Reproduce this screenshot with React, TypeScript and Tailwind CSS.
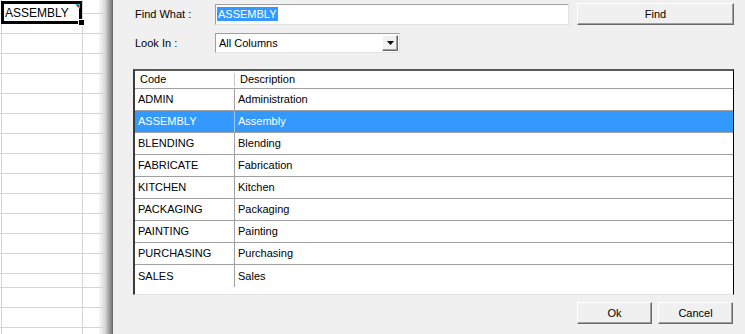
import React from "react";

const rows: [string, string][] = [
  ["ADMIN", "Administration"],
  ["ASSEMBLY", "Assembly"],
  ["BLENDING", "Blending"],
  ["FABRICATE", "Fabrication"],
  ["KITCHEN", "Kitchen"],
  ["PACKAGING", "Packaging"],
  ["PAINTING", "Painting"],
  ["PURCHASING", "Purchasing"],
  ["SALES", "Sales"],
];

// spreadsheet row heights (bottom border included)
const sheetRows = [14, 20, 20, 20, 20, 20, 20, 20, 20, 20, 20, 20, 20, 20, 14, 20, 20, 20];

function RaisedButton({ children, className }: { children: React.ReactNode; className: string }) {
  return (
    <div
      className={
        "flex items-center justify-center border border-t-white border-l-white border-b-[#696969] border-r-[#696969] bg-[#f0f0f0] shadow-[inset_-1px_-1px_0_0_#a0a0a0] text-black " +
        className
      }
    >
      {children}
    </div>
  );
}

export default function App() {
  return (
    <div
      className="flex w-[745px] h-[334px] overflow-hidden bg-[#f0f0f0] text-[11px] text-black"
      style={{ fontFamily: '"Liberation Sans", Arial, sans-serif' }}
    >
      {/* spreadsheet behind */}
      <div className="relative w-[113px] h-full bg-white shrink-0">
        <div className="flex flex-col">
          {sheetRows.map((h, i) => (
            <div key={i} className="flex border-b border-[#d4d4d4]" style={{ height: h }}>
              <div className="w-[1px]" />
              <div className="w-[81px] border-l border-[#d4d4d4]" />
              <div className="flex-1 border-l border-[#d4d4d4]" />
            </div>
          ))}
        </div>
        {/* active cell */}
        <div className="absolute left-[1px] top-[1px] w-[81px] h-[23px] border-[3px] border-black bg-white flex items-center pl-[1px]">
          <span className="text-[12px] leading-none text-black">ASSEMBLY</span>
        </div>
        <svg className="absolute left-[75px] top-[4px]" width="5" height="5" viewBox="0 0 5 5">
          <polygon points="0,0 5,0 5,5" fill="#19c6d6" />
          <polygon points="1,1 4,1 4,4" fill="#e01818" />
        </svg>
        <div className="absolute left-[79px] top-[20px] w-[5px] h-[5px] bg-black outline outline-1 outline-white" />
        {/* shadow of dialog */}
        <div className="absolute right-[1px] top-0 h-full w-[14px] bg-gradient-to-r from-white/0 via-[#d8d8d8] to-[#7a7a7a]" />
        <div className="absolute right-0 top-0 h-full w-[1px] bg-[#6a6a6a]" />
      </div>

      {/* dialog */}
      <div className="flex-1 flex flex-col pt-[3px] pl-[20px] pr-[11px]">
        {/* Find What */}
        <div className="flex items-center h-[22px]">
          <div className="w-[82px] pl-[2px]">Find What :</div>
          <div className="w-[354px] h-[21px] bg-white border border-t-[#a0a0a0] border-l-[#a0a0a0] border-b-[#e3e3e3] border-r-[#e3e3e3] flex items-center pl-[1px]">
            <span className="bg-[#3399ff] text-white leading-[14px] px-[1px]">ASSEMBLY</span>
          </div>
          <RaisedButton className="ml-[8px] w-[157px] h-[22px]">Find</RaisedButton>
        </div>

        {/* Look In */}
        <div className="flex items-center h-[20px] mt-[8px]">
          <div className="w-[82px] pl-[2px]">Look In :</div>
          <div className="w-[185px] h-[20px] bg-white border border-t-[#a0a0a0] border-l-[#a0a0a0] border-b-[#e3e3e3] border-r-[#e3e3e3] flex items-center">
            <span className="flex-1 pl-[3px]">All Columns</span>
            <RaisedButton className="w-[16px] h-[16px] mr-[1px]">
              <svg width="7" height="4" viewBox="0 0 7 4">
                <polygon points="0,0 7,0 3.5,4" fill="#000" />
              </svg>
            </RaisedButton>
          </div>
        </div>

        {/* table */}
        <div className="mt-[16px] h-[226px] w-[601px] bg-white border-t-2 border-l-2 border-r border-b border-t-[#5a5a5a] border-l-[#3a3a3a] border-r-black border-b-[#e3e3e3] flex flex-col">
          <div className="flex h-[18px] border-b border-[#a0a0a0] items-center">
            <div className="w-[99px] pl-[5px] flex items-center h-full">Code</div>
            <div className="w-px h-[14px] bg-[#c8c8c8]" />
            <div className="pl-[5px]">Description</div>
          </div>
          {rows.map(([code, desc], i) => {
            const sel = i === 1;
            const last = i === rows.length - 1;
            return (
              <div
                key={code}
                className={
                  "flex h-[22px] " +
                  (last ? "" : "border-b border-[#a0a0a0] ") +
                  (sel ? "bg-[#3399ff] text-white" : "")
                }
              >
                <div className="w-[99px] pl-[3px] flex items-center">{code}</div>
                <div className={"w-px h-full " + (sel ? "bg-[#9cc8f0]" : "bg-[#a0a0a0]")} />
                <div className="flex-1 pl-[3px] flex items-center">{desc}</div>
              </div>
            );
          })}
        </div>

        {/* buttons */}
        <div className="flex justify-end mt-[7px] pr-[1px]">
          <RaisedButton className="w-[75px] h-[22px]">Ok</RaisedButton>
          <RaisedButton className="ml-[6px] w-[75px] h-[22px]">Cancel</RaisedButton>
        </div>
      </div>
    </div>
  );
}
